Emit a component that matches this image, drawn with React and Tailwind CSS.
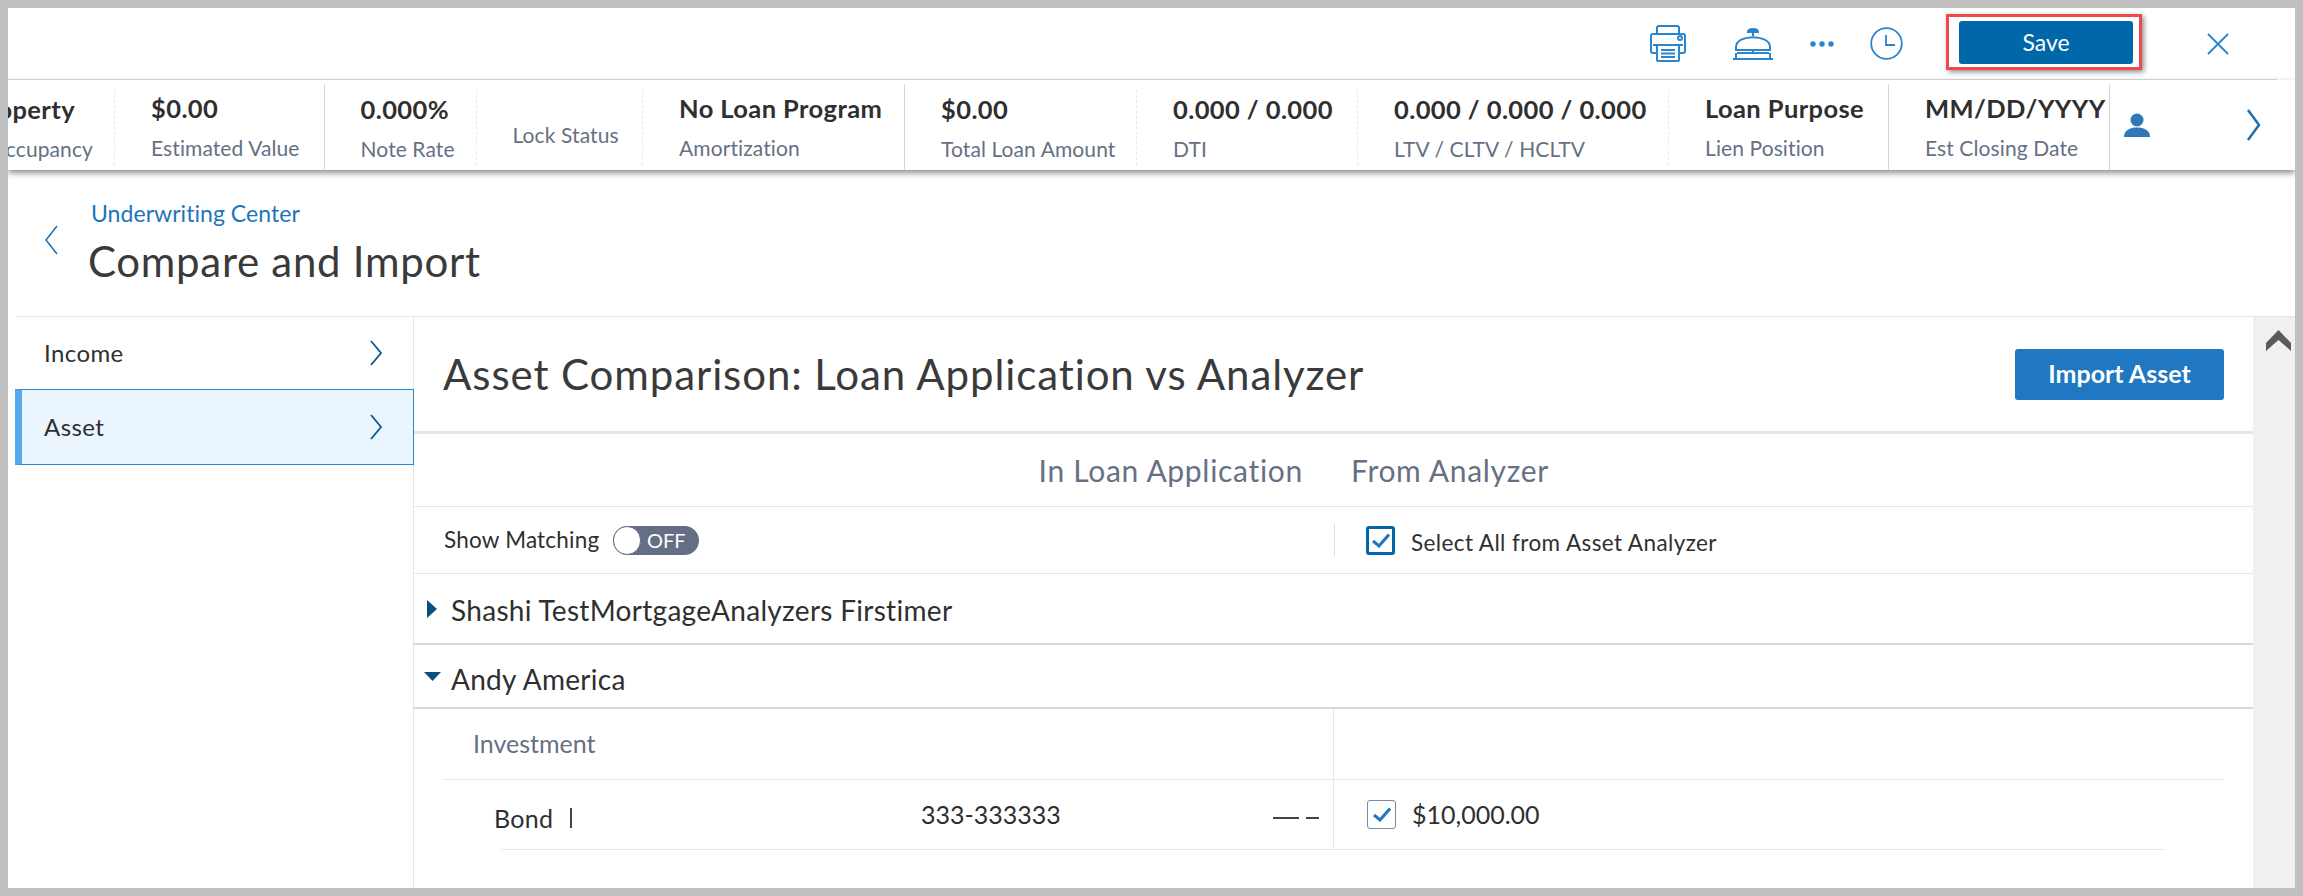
const stats = [
  { w: 'w-[209.5px]', v: '$0.00', l: 'Estimated Value', sep: 'solid' },
  { w: 'w-[152px]', v: '0.000%', l: 'Note Rate', sep: 'dashed' },
  { w: 'w-[166.5px]', l: 'Lock Status', sep: 'dashed' },
  { w: 'w-[262px]', v: 'No Loan Program', l: 'Amortization', sep: 'solid' },
  { w: 'w-[232px]', v: '$0.00', l: 'Total Loan Amount', sep: 'dashed' },
  { w: 'w-[221px]', v: '0.000 / 0.000', l: 'DTI', sep: 'dashed' },
  { w: 'w-[311px]', v: '0.000 / 0.000 / 0.000', l: 'LTV / CLTV / HCLTV', sep: 'dashed' },
  { w: 'w-[220px]', v: 'Loan Purpose', l: 'Lien Position', sep: 'solid' },
  { w: 'w-[221px]', v: 'MM/DD/YYYY', l: 'Est Closing Date', sep: 'solid' },
];

function Check() {
  return (
    <svg viewBox="0 0 18 15" className="w-[18px] h-[15px]" fill="none" stroke="#1e78c2" strokeWidth="3">
      <path d="M1 8l6 5L17 1.500" />
    </svg>
  );
}

function Chevron() {
  return (
    <svg viewBox="0 0 12 26" className="w-[12px] h-[26px]" fill="none" stroke="#0b5a8c" strokeWidth="1.800">
      <path d="M1 1l10 12L1 25" />
    </svg>
  );
}

export default function App() {
  return (
    <div className="w-[2303px] h-[896px] overflow-hidden bg-[#bfbfbf] pt-[8px] pl-[8px] pr-[8px] pb-[8px] text-[#2f2f2f] font-['Lato','Liberation_Sans',sans-serif]">
      <div className="h-[880px] bg-white flex flex-col overflow-hidden">
        <div className="h-[72px] shrink-0 mr-[18px] border-b border-[#d9d9d9] flex items-center">
          <div className="flex-1" />
          <svg viewBox="0 0 36 37" className="w-[36px] h-[37px]" fill="none" stroke="#2a85d0" strokeWidth="2">
            <path d="M7 9V3a2 2 0 012-2h18a2 2 0 012 2v6" />
            <path d="M7 28H3a2 2 0 01-2-2V11a2 2 0 012-2h30a2 2 0 012 2v15a2 2 0 01-2 2h-4" />
            <rect x="7" y="20" width="22" height="16" rx="1" />
            <path d="M3 20h30M11 25h14M11 28.500h14M11 32h14" />
            <circle cx="30" cy="13" r="2" />
          </svg>
          <svg viewBox="0 0 40 32" className="w-[40px] h-[32px] ml-[47px]" fill="none" stroke="#2a85d0" strokeWidth="2">
            <path d="M15 4c0-4 10-4 10 0z" fill="#2a85d0" />
            <path d="M20 4v4M3 22v-3C3 6 37 6 37 19v3z" />
            <path d="M20 22v3M4 25h32M3 30V25M37 30V25" />
            <path d="M0 31h40" />
          </svg>
          <svg viewBox="0 0 24 6" className="w-[24px] h-[6px] ml-[37px]" fill="#2a85d0">
            <circle cx="3" cy="3" r="2.700" />
            <circle cx="12" cy="3" r="2.700" />
            <circle cx="21" cy="3" r="2.700" />
          </svg>
          <svg viewBox="0 0 33 33" className="w-[33px] h-[33px] ml-[36px]" fill="none" stroke="#2a85d0" strokeWidth="1.800">
            <circle cx="16.500" cy="16.500" r="15.300" />
            <path d="M16 8v10h9" />
          </svg>
          <div className="ml-[43px] w-[196px] h-[56px] mb-[3px] border-[3px] border-[#f04848] shadow-[2px_2px_5px_rgba(0,0,0,0.45)] flex items-center pl-[10px]">
            <button className="w-[174px] h-[43px] rounded-[3px] bg-[#0068a8] text-white text-[23px]">Save</button>
          </div>
          <svg viewBox="0 0 22 22" className="w-[22px] h-[22px] ml-[65px] mr-[48px]" fill="none" stroke="#2a85d0" strokeWidth="1.800">
            <path d="M1 1l20 20M21 1L1 21" />
          </svg>
        </div>

        <div className="h-[90px] shrink-0 flex shadow-[0_3px_6px_rgba(0,0,0,0.45)] relative z-10 bg-white">
          <div className="w-[107px] shrink-0 overflow-hidden border-r border-dashed border-[#e8e8e8] mt-[10px] mb-[5px] flex flex-col items-end justify-center pb-[2px] whitespace-nowrap">
            <div className="text-[25.500px] font-bold leading-[32px] tracking-[0.4px] pr-[39px]">Property</div>
            <div className="mt-[12px] text-[21px] leading-[24px] tracking-[0.1px] text-[#667085] pr-[21px]">Occupancy</div>
          </div>
          {stats.map((s) => (
            <div
              key={s.l}
              className={
                s.sep === 'solid'
                  ? `${s.w} shrink-0 border-r border-[#d6d6d6] mt-[4px] pl-[36px] pb-[2px] flex flex-col justify-center`
                  : `${s.w} shrink-0 border-r border-dashed border-[#e8e8e8] mt-[10px] mb-[5px] pl-[36px] pb-[2px] flex flex-col justify-center`
              }
            >
              {s.v ? (
                <>
                  <div className="text-[25.500px] font-bold leading-[32px] tracking-[0.4px] whitespace-nowrap">{s.v}</div>
                  <div className="mt-[12px] text-[21px] leading-[24px] tracking-[0.1px] text-[#667085] whitespace-nowrap">{s.l}</div>
                </>
              ) : (
                <div className="mt-[16px] text-[21px] leading-[24px] tracking-[0.1px] text-[#667085] whitespace-nowrap">{s.l}</div>
              )}
            </div>
          ))}
          <div className="flex-1 flex items-center pl-[14px]">
            <svg viewBox="0 0 26 24" className="w-[26px] h-[24px]" fill="#2f79b8">
              <circle cx="13" cy="7" r="6.500" />
              <path d="M0 24c0-7 6-9.500 13-9.500S26 17 26 24z" />
            </svg>
            <svg viewBox="0 0 16 32" className="w-[16px] h-[32px] ml-[96px]" fill="none" stroke="#1670b5" strokeWidth="2.500">
              <path d="M2 1l11 15L2 31" />
            </svg>
          </div>
        </div>

        <div className="h-[147px] shrink-0 ml-[7px] border-b border-[#e3e6ea] flex">
          <div className="w-[44px] ml-[29px] pt-[55px] shrink-0">
            <svg viewBox="0 0 14 30" className="w-[14px] h-[30px]" fill="none" stroke="#1670b5" strokeWidth="1.500">
              <path d="M13 1L2 15l11 14" />
            </svg>
          </div>
          <div className="pt-[29px]">
            <div className="text-[#1c75bc] text-[23px] leading-[28px] tracking-[0.05px] pl-[3px]">Underwriting Center</div>
            <div className="text-[42px] leading-[48px] tracking-[0.7px] mt-[10px] text-[#3a3a3a]">Compare and Import</div>
          </div>
        </div>

        <div className="flex-1 flex ml-[7px] min-h-0">
          <div className="w-[399px] shrink-0 border-r border-[#e3e6ea]">
            <div className="h-[72px] flex items-center justify-between pl-[29px] pr-[31px] text-[24px] tracking-[0.4px]">
              <span>Income</span>
              <Chevron />
            </div>
            <div className="h-[76px] -mr-[1px] flex items-center justify-between pl-[22px] pr-[31px] text-[24px] tracking-[0.4px] bg-[#eaf5fe] border border-[#2a86cc] border-l-[7px] border-l-[#55a8ec]">
              <span>Asset</span>
              <Chevron />
            </div>
          </div>

          <div className="flex-1 min-w-0 flex flex-col">
            <div className="h-[117px] shrink-0 border-b-[3px] border-[#e3e6ea] flex items-center justify-between pl-[29px] pr-[29px]">
              <div className="text-[42px] leading-[48px] tracking-[0.9px] text-[#3a3a3a] whitespace-nowrap">Asset Comparison: Loan Application vs Analyzer</div>
              <button className="w-[209px] h-[51px] rounded-[3px] bg-[#1f78c1] text-white text-[25px] font-bold">Import Asset</button>
            </div>
            <div className="h-[73px] shrink-0 border-b border-[#e3e6ea] flex text-[30px] tracking-[0.7px] text-[#667085]">
              <div className="w-[889px] flex items-center justify-end leading-[36px]">In Loan Application</div>
              <div className="pl-[48px] flex items-center leading-[36px]">From Analyzer</div>
            </div>
            <div className="h-[67px] shrink-0 border-b border-[#e3e6ea] flex items-center">
              <div className="w-[921px] h-[32px] flex items-center border-r border-[#dddddd] pl-[30px] text-[22.500px] tracking-[0.2px]">
                <span className="w-[159px] whitespace-nowrap">Show Matching</span>
                <div className="ml-[10px] w-[86px] h-[29px] rounded-full bg-[#646e84] flex items-center">
                  <div className="w-[28px] h-[29px] rounded-full bg-white border border-[#646e84]" />
                  <span className="ml-[6px] text-white text-[20px] leading-none tracking-normal">OFF</span>
                </div>
              </div>
              <div className="ml-[31px] w-[29px] h-[29px] rounded-[3px] border-[3px] border-[#0068a8] flex items-center justify-center">
                <Check />
              </div>
              <span className="ml-[16px] mt-[5px] text-[22.500px] tracking-[0.4px] whitespace-nowrap">Select All from Asset Analyzer</span>
            </div>
            <div className="h-[71px] shrink-0 border-b-[2px] border-[#d5d8df] flex items-center text-[28px] tracking-[0.3px]">
              <svg viewBox="0 0 10 18" className="w-[10px] h-[18px] ml-[13px]" fill="#0b4f7c">
                <path d="M0 0l10 9-10 9z" />
              </svg>
              <span className="ml-[14px] mt-[2px] leading-[32px]">Shashi TestMortgageAnalyzers Firstimer</span>
            </div>
            <div className="h-[64px] shrink-0 border-b-[2px] border-[#d5d8df] flex items-center text-[28px] tracking-[0.3px]">
              <svg viewBox="0 0 17 9" className="w-[17px] h-[9px] ml-[10px]" fill="#0b4f7c">
                <path d="M0 0h17L8.500 9z" />
              </svg>
              <span className="ml-[10px] mt-[6px] leading-[32px]">Andy America</span>
            </div>
            <div className="ml-[30px] mr-[29px] h-[71px] shrink-0 border-b border-[#e8e8e8] flex">
              <div className="w-[890px] h-full border-r border-[#e8e8e8] pl-[29px] flex items-center text-[25px] text-[#667085]">Investment</div>
            </div>
            <div className="ml-[88px] mr-[88px] h-[70px] shrink-0 border-b border-[#e8e8e8] flex">
              <div className="w-[832px] h-full border-r border-[#e8e8e8] flex items-center text-[25px] whitespace-nowrap">
                <span className="w-[76px] shrink-0 -ml-[8px] mt-[8px] tracking-[0.3px]">Bond</span>
                <span className="mt-[6px] w-[2px] h-[20px] shrink-0 bg-[#444444]" />
                <span className="ml-[349px] w-[351.500px] shrink-0">333-333333</span>
                <span className="mt-[6px] w-[26px] h-[2px] shrink-0 bg-[#444444]" />
                <span className="ml-[7px] mt-[6px] w-[13px] h-[2px] shrink-0 bg-[#444444]" />
              </div>
              <div className="ml-[33px] self-center w-[29px] h-[29px] rounded-[3px] border border-[#7c8aa0] flex items-center justify-center">
                <Check />
              </div>
              <span className="ml-[16px] self-center text-[25px]">$10,000.00</span>
            </div>
          </div>

          <div className="w-[42px] shrink-0 bg-[#f0f0f0] pt-[13px] pl-[13px]">
            <svg viewBox="0 0 25 22" className="w-[25px] h-[22px]" fill="#5a5a5a">
              <path d="M12.500 0L25 13v8L12.500 10 0 21v-8z" />
            </svg>
          </div>
        </div>
      </div>
    </div>
  );
}
